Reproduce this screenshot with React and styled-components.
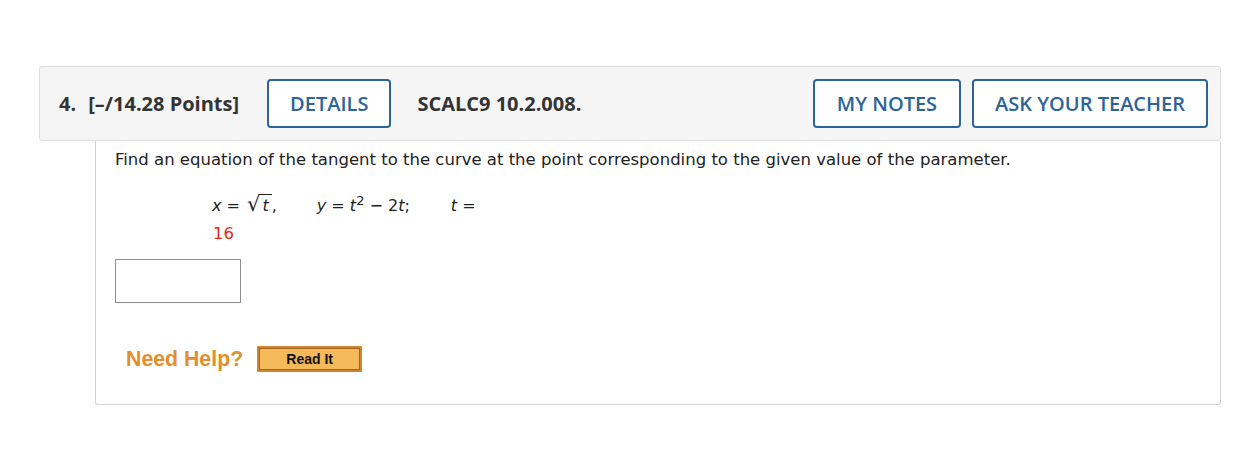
import React from "react";
import styled, { createGlobalStyle } from "styled-components";

const Global = createGlobalStyle`
  html, body { margin: 0; padding: 0; background: #fff; }
  body { font-family: "Open Sans", sans-serif; }
`;

const Page = styled.div`
  padding: 66px 21px 0 39px;
`;

const Header = styled.div`
  display: flex;
  align-items: center;
  background: #f5f5f5;
  border: 1px solid #dedede;
  border-radius: 3px;
  height: 75px;
  padding: 0 12px 0 19px;
  box-sizing: border-box;
`;

const Title = styled.span`
  font-family: "Open Sans", sans-serif;
  font-weight: 700;
  font-size: 20px;
  color: #333;
  white-space: pre;
  margin-right: 28px;
`;

const Num = styled.span`
  margin-right: 12px;
`;

const Code = styled.span`
  font-family: "Open Sans", sans-serif;
  font-weight: 700;
  font-size: 20px;
  color: #333;
  margin-left: 26px;
`;

const Spacer = styled.div`
  flex: 1;
`;

const OutlineButton = styled.button`
  height: 49px;
  padding: 0 ${(p) => p.$pad || 21}px;
  margin-left: ${(p) => p.$ml || 0}px;
  background: #fff;
  border: 2px solid #2c6497;
  border-radius: 4px;
  color: #2c6497;
  font-family: "Open Sans", sans-serif;
  font-weight: 600;
  font-size: 20px;
  cursor: pointer;
  box-sizing: border-box;
`;

const Body = styled.div`
  margin-left: 56px;
  border: 1px solid #d2d2d2;
  border-top: none;
  border-radius: 0 0 3px 3px;
  height: 264px;
  box-sizing: border-box;
  padding: 8px 19px 0 19px;
  font-family: "DejaVu Sans", Verdana, sans-serif;
  color: #222;
`;

const Prompt = styled.p`
  margin: 0;
  font-size: 16.5px;
  line-height: 22px;
`;

const MathLine = styled.div`
  display: flex;
  align-items: baseline;
  margin: 23px 0 0 97px;
  font-size: 16px;
  line-height: 22px;
`;

const MathPart = styled.span`
  margin-right: ${(p) => p.$mr || 0}px;
  white-space: pre;
`;

const Var = styled.i`
  font-style: italic;
`;

const Radical = styled.span`
  font-size: 21px;
  line-height: 1;
  margin-left: 2px;
`;

const Radicand = styled.span`
  border-top: 1px solid #222;
  padding: 1px 3px 0 2px;
  font-style: italic;
`;

const Sup = styled.sup`
  font-size: 13px;
  line-height: 0;
`;

const Value = styled.div`
  margin: 6px 0 0 98px;
  color: #e32618;
  font-size: 16.5px;
  line-height: 22px;
`;

const AnswerInput = styled.input`
  display: block;
  margin-top: 14px;
  width: 126px;
  height: 44px;
  box-sizing: border-box;
  border: 1px solid #8e8e8e;
  background: #fff;
`;

const HelpRow = styled.div`
  display: flex;
  align-items: center;
  margin: 43px 0 0 11px;
`;

const NeedHelp = styled.span`
  font-family: "Liberation Sans", Arial, sans-serif;
  font-weight: 700;
  font-size: 21.3px;
  color: #e58d2c;
  margin-right: 14px;
`;

const ReadIt = styled.button`
  width: 105px;
  height: 26px;
  padding: 2px;
  background: #d08630;
  border: none;
  border-radius: 1px;
  box-sizing: border-box;
  cursor: pointer;
  display: flex;
`;

const ReadItInner = styled.span`
  flex: 1;
  display: flex;
  align-items: center;
  justify-content: center;
  background: #f4b95a;
  border: 1px solid #a8641c;
  font-family: "Liberation Sans", Arial, sans-serif;
  font-weight: 700;
  font-size: 14px;
  color: #111;
`;

export default function App() {
  return (
    <>
      <Global />
      <Page>
        <Header>
          <Title>
            <Num>4.</Num>[–/14.28 Points]
          </Title>
          <OutlineButton>DETAILS</OutlineButton>
          <Code>SCALC9 10.2.008.</Code>
          <Spacer />
          <OutlineButton $pad={22}>MY NOTES</OutlineButton>
          <OutlineButton $ml={11}>ASK YOUR TEACHER</OutlineButton>
        </Header>
        <Body>
          <Prompt>
            Find an equation of the tangent to the curve at the point corresponding to the given value of the parameter.
          </Prompt>
          <MathLine>
            <MathPart $mr={40}>
              <Var>x</Var> = <Radical>√</Radical>
              <Radicand>t</Radicand>,
            </MathPart>
            <MathPart $mr={41}>
              <Var>y</Var> = <Var>t</Var>
              <Sup>2</Sup> − 2<Var>t</Var>;
            </MathPart>
            <MathPart>
              <Var>t</Var> =
            </MathPart>
          </MathLine>
          <Value>16</Value>
          <AnswerInput type="text" />
          <HelpRow>
            <NeedHelp>Need Help?</NeedHelp>
            <ReadIt>
              <ReadItInner>Read It</ReadItInner>
            </ReadIt>
          </HelpRow>
        </Body>
      </Page>
    </>
  );
}
